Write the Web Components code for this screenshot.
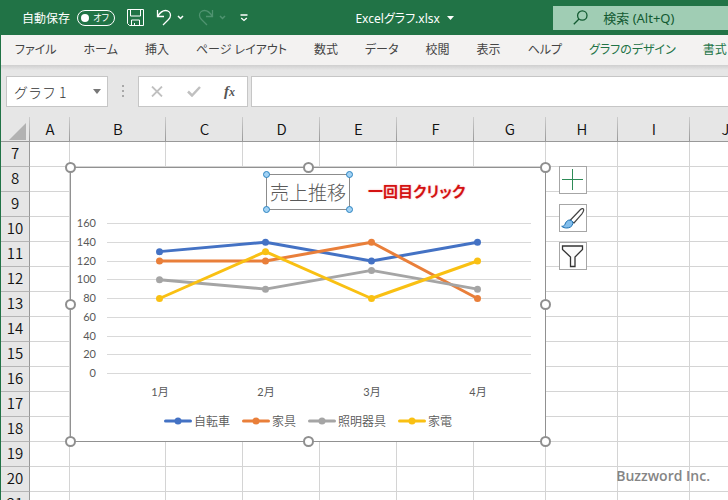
<!DOCTYPE html>
<html lang="ja">
<head>
<meta charset="utf-8">
<title>Excelグラフ.xlsx</title>
<style>
html, body { height: 100%; }
body { margin: 0; overflow: hidden; font-family: "Noto Sans", "Noto Sans CJK JP", sans-serif; font-size: 13px; }
</style>
</head>
<body>
<excel-window>
  <title-bar slot="title" name="Excelグラフ.xlsx"></title-bar>
  <ribbon-tabs slot="tabs">
    <ribbon-tab>ファイル</ribbon-tab>
    <ribbon-tab>ホーム</ribbon-tab>
    <ribbon-tab>挿入</ribbon-tab>
    <ribbon-tab>ページ レイアウト</ribbon-tab>
    <ribbon-tab>数式</ribbon-tab>
    <ribbon-tab>データ</ribbon-tab>
    <ribbon-tab>校閲</ribbon-tab>
    <ribbon-tab>表示</ribbon-tab>
    <ribbon-tab>ヘルプ</ribbon-tab>
    <ribbon-tab context>グラフのデザイン</ribbon-tab>
    <ribbon-tab context>書式</ribbon-tab>
  </ribbon-tabs>
  <formula-bar slot="formula"></formula-bar>
  <sheet-grid slot="sheet">
    <line-chart>
      <span slot="title">売上推移</span>
      <span slot="note">一回目クリック</span>
    </line-chart>
    <chart-tools></chart-tools>
  </sheet-grid>
  <span slot="mark">Buzzword Inc.</span>
</excel-window>

<script>
const define = (name, html, setup) => customElements.define(name, class extends HTMLElement {
  constructor() {
    super();
    this.attachShadow({ mode: 'open' }).innerHTML = html;
  }
  connectedCallback() { if (setup) setup(this, this.shadowRoot); }
});

define('excel-window', `
<style>
  :host { display: flex; flex-direction: column; position: relative; height: 100%; box-sizing: border-box; border-left: 1px solid #217346; background: #e6e6e6; }
  ::slotted([slot=sheet]) { flex: 1; min-height: 0; }
  .mark { position: absolute; right: 18px; bottom: 13px; color: #858585; font: 600 14px/22px "Open Sans", "Noto Sans", sans-serif; }
</style>
<slot name="title"></slot><slot name="tabs"></slot><slot name="formula"></slot><slot name="sheet"></slot>
<div class="mark"><slot name="mark"></slot></div>`);

define('title-bar', `
<style>
  :host { display: grid; grid-template-columns: auto 1fr 24%; align-items: center; height: 35px; background: #217346; color: #fff; font-size: 12px; margin-left: -1px; font-feature-settings: "palt"; }
  .quick { display: flex; align-items: center; padding-left: 22px; }
  label.auto { display: flex; align-items: center; gap: 7px; margin-right: 12px; }
  input[type=checkbox] { appearance: none; position: absolute; opacity: 0; margin: 0; }
  .track { display: flex; align-items: center; justify-content: space-between; box-sizing: border-box; width: 38px; height: 16px; padding: 0 5px 0 3px; border: 1px solid #fff; border-radius: 8px; font-size: 9px; line-height: 14px; }
  .track::before { content: ""; width: 8px; height: 8px; border-radius: 50%; background: #fff; }
  button { display: flex; align-items: center; padding: 0; border: 0; background: none; color: inherit; font: inherit; font-feature-settings: inherit; }
  svg { display: block; fill: none; stroke: currentColor; }
  .save { margin-right: 12px; }
  .step { gap: 5px; margin-right: 14px; }
  .off { color: #4f9370; }
  .name { justify-self: center; gap: 7px; margin-left: 8px; }
  .search { display: flex; align-items: center; gap: 15px; height: 24px; padding-left: 20px; background: #a0cdb4; color: #125a31; font-size: 13px; }
  .search input { flex: 1; min-width: 0; padding: 0; border: 0; outline: 0; background: none; font: inherit; color: inherit; }
  .search input::placeholder { color: inherit; opacity: 1; }
</style>
<div class="quick">
  <label class="auto">自動保存<input type="checkbox"><span class="track">オフ</span></label>
  <button class="save" aria-label="上書き保存"><svg width="17" height="17" viewBox="0 0 17 17"><path d="M.5.5h16v16H2.500l-2-2zM3.500.5v6.500h10V.5M4.500 16v-5h8v5M7.500 16v-2"/></svg></button>
  <button class="step" aria-label="元に戻す"><svg width="16" height="17" viewBox="0 0 16 17" stroke-width="1.300"><path d="M1.500 1v6.500H8M1.500 7.500C4 3.500 6.500 1.500 9.500 1.500c3 0 5 2.200 5 4.800 0 1.700-.8 3-2 4.200L7 16"/></svg><svg width="7" height="5" viewBox="0 0 7 5" stroke-width="1.500"><path d="M1 1l2.500 2.500L6 1"/></svg></button>
  <button class="step off" aria-label="やり直し"><svg width="16" height="17" viewBox="0 0 16 17" stroke-width="1.300"><path d="M14.500 1v6.500H8M14.500 7.500C12 3.500 9.500 1.500 6.500 1.500c-3 0-5 2.200-5 4.800 0 1.700.8 3 2 4.200L9 16"/></svg><svg width="7" height="5" viewBox="0 0 7 5" stroke-width="1.500"><path d="M1 1l2.500 2.500L6 1"/></svg></button>
  <button aria-label="クイック アクセス"><svg width="8" height="8" viewBox="0 0 8 8" stroke-width="1.300"><path d="M.5 1h7M1.200 4L4 6.500 6.800 4"/></svg></button>
</div>
<button class="name"><span></span><svg width="7" height="4" viewBox="0 0 7 4"><path d="M0 0h7L3.500 4z" fill="currentColor" stroke="none"/></svg></button>
<label class="search"><svg width="15" height="15" viewBox="0 0 15 15" stroke-width="1.300"><circle cx="9.300" cy="5.500" r="4.700"/><path d="M6 9L.8 14.200"/></svg><input type="search" placeholder="検索 (Alt+Q)" aria-label="検索"></label>`,
(host, root) => { root.querySelector('.name span').textContent = host.getAttribute('name'); });

define('ribbon-tabs', `
<style>
  :host { display: flex; gap: 27px; align-items: center; height: 30px; padding-left: 14px; overflow: hidden; background: #f3f2f1; font-size: 12px; font-feature-settings: "palt"; }
</style><slot></slot>`, host => host.setAttribute('role', 'tablist'));

define('ribbon-tab', `
<style>
  :host { display: block; flex: none; color: #444; }
  :host([context]) { color: #217346; }
  button { display: block; padding: 0; border: 0; background: none; color: inherit; font: inherit; font-feature-settings: inherit; line-height: 20px; white-space: nowrap; }
</style><button role="tab"><slot></slot></button>`);

define('formula-bar', `
<style>
  :host { display: flex; align-items: flex-start; height: 41px; padding: 11px 0 0 5px; background: linear-gradient(#cfcfcf, #e6e6e6 5px); }
  .box { display: flex; align-items: center; box-sizing: border-box; height: 31px; border: 1px solid #c6c6c6; background: #fff; }
  .name { width: 102px; padding: 0 6px 0 7px; }
  input { min-width: 0; flex: 1; padding: 0; border: 0; outline: 0; background: none; color: #333; font: 300 14px "Noto Sans CJK JP", sans-serif; }
  button { display: block; padding: 0; border: 0; background: none; color: #c0c0c0; }
  svg { display: block; fill: none; stroke: currentColor; }
  .dots { margin: 9px 13px 0 13px; color: #a8a8a8; }
  .tools { width: 110px; justify-content: space-between; padding: 0 12px 0 12px; margin-right: 3px; }
  .fx { color: #555; font: italic bold 15px/20px "Liberation Serif", serif; }
  .fx small { font-size: 12px; }
  .line { flex: 1; border-right: 0; }
</style>
<div class="box name"><input value="グラフ 1" aria-label="名前ボックス"><button aria-label="一覧"><svg width="8" height="5" viewBox="0 0 8 5"><path d="M0 0h8L4 5z" fill="#777" stroke="none"/></svg></button></div>
<svg class="dots" width="4" height="12" viewBox="0 0 4 12"><path d="M2 0v2M2 5v2M2 10v2" stroke-width="2"/></svg>
<div class="box tools">
  <button aria-label="キャンセル"><svg width="12" height="11" viewBox="0 0 12 11" stroke-width="1.800"><path d="M1 .5l10 10M11 .5l-10 10"/></svg></button>
  <button aria-label="入力"><svg width="14" height="11" viewBox="0 0 14 11" stroke-width="2.500"><path d="M1 5.500L5 9.500 13 1"/></svg></button>
  <button class="fx" aria-label="関数の挿入">f<small>x</small></button>
</div>
<div class="box line"><input aria-label="数式バー"></div>`);

define('sheet-grid', `
<style>
  :host { display: block; position: relative; overflow: hidden; background: #fff; }
  table { table-layout: fixed; width: max(100%, 760px); border-spacing: 0; font: 300 15px/22px "Noto Sans CJK JP", sans-serif; color: #111; }
  col.h { width: 29px; } col.a { width: 40px; } col.b { width: 96px; } col.m { width: 77px; } col.n { width: 72px; }
  th, td { box-sizing: border-box; height: 25px; padding: 0; }
  td { border-right: 1px solid #d4d4d4; border-bottom: 1px solid #d4d4d4; }
  th { font-weight: 350; background: #e6e6e6; }
  thead th { border-bottom: 1px solid #999; background: linear-gradient(#ccc, #999) right / 1px 100% no-repeat #e6e6e6; }
  tbody th { padding-bottom: 2px; border-right: 1px solid #999; border-bottom: 1px solid #b5b5b5; }
  .corner svg { display: block; margin: 4px 0 0 8px; }
  slot { position: absolute; }
</style>
<table>
  <colgroup><col class="h"><col class="a"><col class="b"><col class="m"><col class="m"><col class="m"><col class="m"><col class="n"><col class="n"><col class="n"><col></colgroup>
  <thead><tr><th class="corner"><svg width="17" height="17" viewBox="0 0 17 17"><path d="M17 0v17H0z" fill="#b2b2b2"/></svg></th></tr></thead>
  <tbody></tbody>
</table>
<slot></slot>`, (host, root) => {
  const letters = [...'ABCDEFGHIJ'];
  const head = root.querySelector('thead tr'), body = root.querySelector('tbody');
  for (const l of letters) { const th = document.createElement('th'); th.scope = 'col'; th.textContent = l; head.append(th); }
  for (let r = 7; r <= 21; r++) {
    const tr = body.insertRow(), th = document.createElement('th');
    th.scope = 'row'; th.textContent = r; tr.append(th);
    letters.forEach(() => tr.insertCell());
  }
});

define('line-chart', `
<style>
  :host { position: absolute; left: 69px; top: 50px; width: 476px; height: 275px; box-sizing: border-box; border: 1px solid #919191; background: #fff; color: #595959; padding-top: 6px; font: 12px "Noto Sans CJK JP", sans-serif; }
  .title { position: relative; width: max-content; margin: 0 auto; padding: 0 3px; border: 1px solid #8c8c8c; font-size: 19px; line-height: 34px; font-weight: 300; }
  .note { position: absolute; left: 297px; top: 11px; color: #d41212; font-size: 15px; line-height: 24px; font-weight: 700; font-feature-settings: "palt"; white-space: nowrap; text-shadow: 0 0 2px #f5b5b5; }
  .plot { display: grid; grid-template-columns: 25px 1fr; column-gap: 11px; padding-right: 14px; margin-top: 6px; }
  .scale { display: flex; flex-direction: column; justify-content: space-between; text-align: right; font: 11px/14px Lato, sans-serif; }
  svg { display: block; overflow: visible; }
  .plot svg { width: 100%; height: 150px; margin: 7px 0; }
  .months { grid-column: 2; display: grid; grid-template-columns: repeat(4, 1fr); text-align: center; line-height: 18px; margin-top: 3px; font-size: 11px; font-family: Lato, "Noto Sans CJK JP", sans-serif; }
  .legend { display: flex; justify-content: center; gap: 12px; margin-top: 11px; line-height: 18px; font-weight: 350; }
  .legend span { display: flex; align-items: center; gap: 2px; }
  .frame { position: absolute; display: grid; grid-template-columns: repeat(3, auto); justify-content: space-between; align-content: space-between; pointer-events: none; }
  .frame i { box-sizing: border-box; border-radius: 50%; }
  .outer { inset: -6px; }
  .outer i { width: 11px; height: 11px; border: 2px solid #8f8f8f; background: #fff; }
  .outer i:nth-child(5) { visibility: hidden; }
  .inner { inset: -4px; grid-template-columns: repeat(2, auto); }
  .inner i { width: 7px; height: 7px; border: 1px solid #2b83c0; background: #a3d3f5; }
</style>
<div class="title"><slot name="title"></slot><div class="frame inner"><i></i><i></i><i></i><i></i></div></div>
<div class="note"><slot name="note"></slot></div>
<div class="plot">
  <div class="scale"></div>
  <svg class="lines" viewBox="0 0 424 150" preserveAspectRatio="none"></svg>
  <div class="months"></div>
</div>
<div class="legend"></div>
<div class="frame outer"><i></i><i></i><i></i><i></i><i></i><i></i><i></i><i></i><i></i></div>`, (host, root) => {
  const series = [
    ['自転車', '#4472c4', [130, 140, 120, 140]],
    ['家具', '#e97f3a', [120, 120, 140, 80]],
    ['照明器具', '#a5a5a5', [100, 90, 110, 90]],
    ['家電', '#f9c013', [80, 130, 80, 120]]
  ];
  const y = v => 150.5 - v * 150 / 160;
  let lines = '', scale = '';
  for (let v = 160; v >= 0; v -= 20) {
    scale += `<span>${v}</span>`;
    const g = Math.floor(y(v)) + .5;
    lines += `<path d="M0 ${g}H424" stroke="#d9d9d9"/>`;
  }
  for (const [, color, vals] of series) {
    const pts = vals.map((v, i) => [52.5 + 106 * i, y(v)]);
    lines += `<polyline points="${pts.join(' ')}" fill="none" stroke="${color}" stroke-width="3" stroke-linejoin="round"/>`;
    lines += pts.map(p => `<circle cx="${p[0]}" cy="${p[1]}" r="3.5" fill="${color}"/>`).join('');
  }
  root.querySelector('.scale').innerHTML = scale;
  root.querySelector('.lines').innerHTML = lines;
  root.querySelector('.months').innerHTML = [1, 2, 3, 4].map(m => `<span>${m}月</span>`).join('');
  root.querySelector('.legend').innerHTML = series.map(([name, c]) =>
    `<span><svg width="28" height="8" viewBox="0 0 28 8"><path d="M1.500 4h25" stroke="${c}" stroke-width="3" stroke-linecap="round"/><circle cx="14" cy="4" r="3.500" fill="${c}"/></svg>${name}</span>`).join('');
});

define('chart-tools', `
<style>
  :host { position: absolute; left: 558px; top: 49px; display: flex; flex-direction: column; gap: 10px; }
  button { display: block; box-sizing: border-box; width: 28px; height: 28px; padding: 0; border: 1px solid #a6a6a6; background: #fff; }
  svg { display: block; fill: none; }
</style>
<button aria-label="グラフ要素"><svg width="26" height="26" viewBox="0 0 26 26"><path d="M2 12.500h21M12.500 2v21" stroke="#2e8b57"/></svg></button>
<button aria-label="グラフ スタイル"><svg width="26" height="26" viewBox="0 0 26 26"><path d="M10 15.500L20.500 4.500c1.500-1.400 3.500-1 3.200.6-.2 1.400-1 2.700-2 4L14 18z" fill="#fff" stroke="#444" stroke-width="1.200"/><path d="M8.500 15.200c2-.8 4.800 1 4.400 3.200-.7 3.400-3.500 4.600-6.200 4.600-2 0-3.700-.5-5-1.700 1.600 0 2.700-.5 3.300-2 .6-2 1.600-3.300 3.500-4.100z" fill="#83beec" stroke="#1c6fb0"/></svg></button>
<button aria-label="グラフ フィルター"><svg width="26" height="26" viewBox="0 0 26 26"><path d="M2.500 3h20v3.500L15 14v9.500h-4.500V14l-8-7.500z" fill="#fafafa" stroke="#333" stroke-width="1.300"/></svg></button>`);
</script>
</body>
</html>
